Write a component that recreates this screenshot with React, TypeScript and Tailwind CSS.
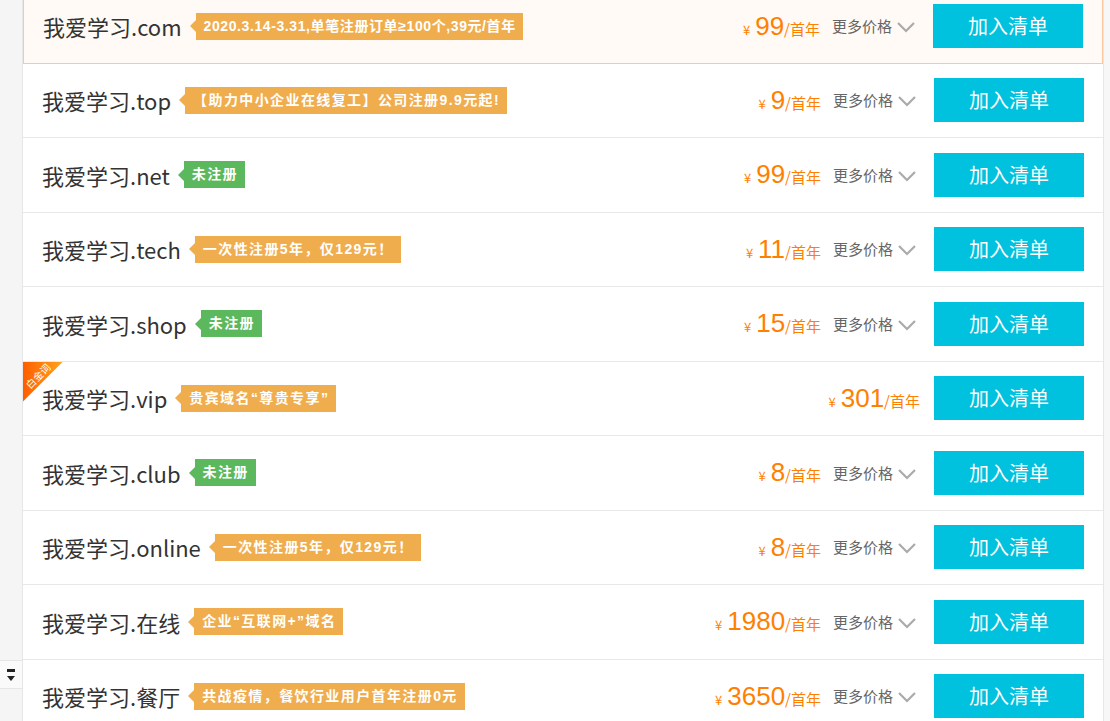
import React from "react";

type Row = {
  suffix: string;
  tag: string;
  green?: boolean;
  price: string;
  more?: boolean;
  corner?: boolean;
  active?: boolean;
};

const ROWS: Row[] = [
  { suffix: ".com", tag: "2020.3.14-3.31,单笔注册订单≥100个,39元/首年", price: "99", more: true, active: true },
  { suffix: ".top", tag: "【助力中小企业在线复工】公司注册9.9元起!", price: "9", more: true },
  { suffix: ".net", tag: "未注册", green: true, price: "99", more: true },
  { suffix: ".tech", tag: "一次性注册5年，仅129元！", price: "11", more: true },
  { suffix: ".shop", tag: "未注册", green: true, price: "15", more: true },
  { suffix: ".vip", tag: "贵宾域名“尊贵专享”", price: "301", corner: true },
  { suffix: ".club", tag: "未注册", green: true, price: "8", more: true },
  { suffix: ".online", tag: "一次性注册5年，仅129元！", price: "8", more: true },
  { suffix: ".在线", tag: "企业“互联网+”域名", price: "1980", more: true },
  { suffix: ".餐厅", tag: "共战疫情，餐饮行业用户首年注册0元", price: "3650", more: true },
];

const CJK = "font-['Noto_Sans_CJK_SC',sans-serif]";

export default function App() {
  return (
    <div className={`flex h-[721px] w-[1110px] overflow-hidden bg-[#f5f5f5] ${CJK}`}>
      {/* left gutter */}
      <div className="w-[23px] shrink-0 border-r border-[#e6e6e6]">
        <div className="mt-[660px] flex h-[29px] flex-col items-center justify-center gap-[4px] border-y border-[#e6e6e6] bg-[#fafafa]">
          <span className="h-[3px] w-[8px] bg-[#222]" />
          <span className="h-0 w-0 border-x-[4px] border-t-[5px] border-x-transparent border-t-[#222]" />
        </div>
      </div>

      {/* list */}
      <div className="mt-[-11px] flex w-[1080px] shrink-0 flex-col bg-white">
        {ROWS.map((r) => (
          <DomainRow key={r.suffix} row={r} />
        ))}
      </div>

      {/* right gutter */}
      <div className="flex-1 border-l border-[#e6e6e6] bg-[#f7f7f7]" />
    </div>
  );
}

function DomainRow({ row }: { row: Row }) {
  return (
    <div
      className={
        "relative flex h-[74.5px] shrink-0 items-center pl-[19px] pr-[19px] " +
        (row.active ? "border border-[#fcc7a0] bg-[#fffaf5]" : "border-b border-[#e8e8e8]")
      }
    >
      {row.corner && (
        <div className="absolute left-0 top-0 h-[40px] w-[40px]">
          <div className="absolute inset-0 bg-linear-to-r from-[#ff5c00] to-[#ffa31a] [clip-path:polygon(0_0,100%_0,0_100%)]" />
          <span className="absolute left-[-1px] top-[9px] w-[32px] rotate-[-45deg] whitespace-nowrap text-center text-[10px] leading-none text-white">
            白金词
          </span>
        </div>
      )}
      <span className="text-[22px] leading-none text-[#333]">我爱学习{row.suffix}</span>
      <span className="ml-[8px] flex items-center">
        <span
          className={
            "h-0 w-0 border-y-[6px] border-r-[6px] border-y-transparent " +
            (row.green ? "border-r-[#5cb85c]" : "border-r-[#f0ad4e]")
          }
        />
        <span
          className={
            "flex h-[27px] items-center whitespace-nowrap pl-[8px] pr-[7px] font-['Liberation_Sans','Noto_Sans_CJK_SC',sans-serif] text-[14px] font-bold text-white " +
            (row.active ? "tracking-[0.6px] " : "tracking-[1.4px] ") +
            (row.green ? "bg-[#5cb85c]" : "bg-[#f0ad4e]")
          }
        >
          {row.tag}
        </span>
      </span>

      <div className="flex-1" />

      <span className="flex items-baseline text-[#ff8000]">
        <span className="mr-[5px] text-[13px]">¥</span>
        <span className="font-['Liberation_Sans',sans-serif] text-[26px] leading-none">{row.price}</span>
        <span className="text-[15px]">/首年</span>
      </span>

      {row.more && (
        <span className="ml-[12px] flex items-center text-[15px] text-[#666]">
          更多价格
          <svg className="ml-[4px] mt-[2px]" width="20" height="12" viewBox="0 0 20 12" fill="none">
            <polyline points="2,2 10,10 18,2" stroke="#aaa" strokeWidth="2.2" />
          </svg>
        </span>
      )}

      <button
        type="button"
        className={
          "h-[44px] w-[150px] bg-[#00c1de] text-[20px] text-white " + (row.more ? "ml-[17px]" : "ml-[14px]")
        }
      >
        加入清单
      </button>
    </div>
  );
}
